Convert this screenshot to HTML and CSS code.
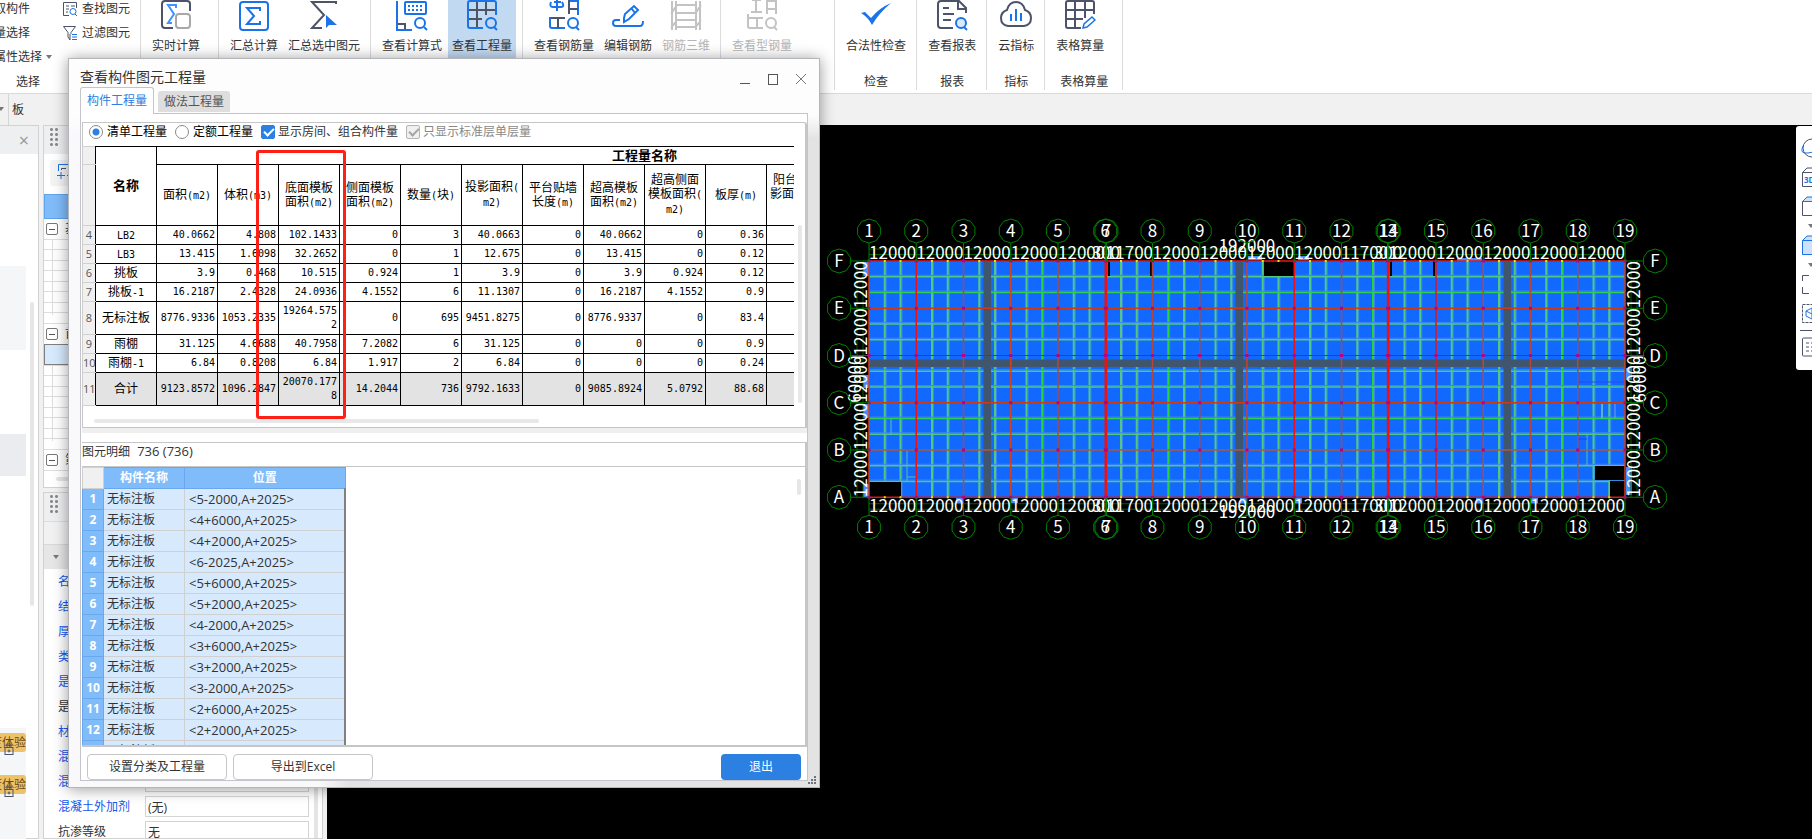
FILE: index.html
```html
<!DOCTYPE html>
<html lang="zh-CN">
<head>
  <meta charset="UTF-8" />
  <meta name="viewport" content="width=device-width, initial-scale=1.0" />
  <title>查看构件图元工程量</title>
  <link rel="stylesheet" href="styles.css">
</head>
<body>
  <header class="ribbon">
    <section class="group group-select">
      <div class="select-cols">
        <div class="mini-col">
          <button class="mini">拾取构件</button>
          <button class="mini">批量选择</button>
          <button class="mini">按属性选择 <i class="caret"></i></button>
        </div>
        <div class="mini-col">
          <button class="mini">
            <svg width="16" height="16" viewBox="0 0 16 16" fill="none" stroke="#4d5368"><path d="M7 14.500H1.500V1.500H14.500V7M4 5h3M9 5h4M4 8h3M4 11h2"/><circle cx="11" cy="10.500" r="3" stroke="#1a73e8"/><path d="M13 13l2 2" stroke="#1a73e8"/></svg>
            查找图元</button>
          <button class="mini">
            <svg width="16" height="16" viewBox="0 0 16 16" fill="none" stroke="#4d5368"><path d="M1.500 1.500H13.500L9 7.500V9M1.500 1.500L6 7.500V12L8 15V9"/><path d="M10 9.500h5M10 12h5M10 14.500h5" stroke="#1a73e8"/></svg>
            过滤图元</button>
        </div>
      </div>
      <span class="group-name">选择</span>
    </section>
    <section class="group group-live">
      <div class="tools">
        <button class="tool">
          <svg viewBox="0 0 32 32" fill="none" stroke-width="2"><path d="M30 11V4q0-3-3-3H5Q2 1 2 4V25q0 3 3 3h8" stroke="#4d5368"/><path d="M16 8V5H8l6 9-6 9h4" stroke="#3d94ff"/><rect x="16" y="14" width="14" height="14" rx="3" fill="#fff" stroke="#a8a8a8"/></svg>
          实时计算</button>
      </div>
    </section>
    <section class="group">
      <div class="tools">
        <button class="tool">
          <svg viewBox="0 0 32 32" fill="none" stroke="#1a73e8" stroke-width="2"><rect x="2" y="2" width="28" height="28" rx="3"/><path d="M22 11V8H9l7 8-7 8h13v-3"/></svg>
          汇总计算</button>
        <button class="tool">
          <svg viewBox="0 0 32 32" fill="none" stroke="#4d5368" stroke-width="2"><path d="M28 4V2H4l12 13L4 28h10"/><path d="M18 15v13l3-3h8z" fill="#1a73e8" stroke="none"/></svg>
          汇总选中图元</button>
      </div>
    </section>
    <section class="group">
      <div class="tools">
        <button class="tool">
          <svg viewBox="0 0 32 32" fill="none" stroke="#1a73e8" stroke-width="2"><path d="M1 1V30H16"/><rect x="9" y="2" width="21" height="12" rx="1"/><path d="M12 6h16M12 10h16" stroke-dasharray="2 2"/><path d="M2 24h7v5" stroke="#4d5368"/><circle cx="24" cy="23" r="5"/><path d="M28 27l3 3"/></svg>
          查看计算式</button>
        <button class="tool active">
          <svg viewBox="0 0 32 32" fill="none" stroke="#1a73e8" stroke-width="2"><path d="M17 28H4q-2 0-2-2V3q0-2 2-2H28q2 0 2 2V15"/><path d="M11 2V27M20 2V15M3 10H29M3 19H16" stroke="#4d5368"/><circle cx="25" cy="23" r="5"/><path d="M28 27l3 3"/></svg>
          查看工程量</button>
      </div>
    </section>
    <section class="group">
      <div class="tools">
        <button class="tool">
          <svg viewBox="0 0 32 32" fill="none" stroke="#1a73e8" stroke-width="2"><path d="M2 17V26q0 2 2 2H17M9 0V11M3 2q-2 5 2 5h8q4 0 1-5M6 2h7M30 0V15M21 1h9"/><path d="M21 0V14M21 9h9M3 18H17M10 18V28" stroke="#4d5368"/><circle cx="25" cy="23" r="5"/><path d="M28 27l3 3"/></svg>
          查看钢筋量</button>
        <button class="tool">
          <svg viewBox="0 0 32 32" fill="none" stroke="#1a73e8" stroke-width="2"><path d="M12 18l1-4 9-8 4 4-9 9-5 3zM20 9l3 4"/><path d="M8 20H4q-3 0-3 3t3 3H28q3 0 3-5"/></svg>
          编辑钢筋</button>
        <button class="tool" disabled>
          <svg viewBox="0 0 32 32" fill="none" stroke="#c3c3c3" stroke-width="2"><path d="M2 1V30M6 1V30M26 1V30M30 1V30M6 5H26M6 13H26M6 20H26M6 27H26M1 14l6-9M1 28l6-8M25 14l6-9M25 28l6-8"/></svg>
          钢筋三维</button>
      </div>
    </section>
    <section class="group group-steel">
      <div class="tools">
        <button class="tool" disabled>
          <svg viewBox="0 0 32 32" fill="none" stroke="#c3c3c3" stroke-width="2"><path d="M2 14V26q0 2 2 2H17M6 0h9M10 0V12M5 12h11M21 14V1H30V14M21 9h9M3 18H17M11 18V28"/><circle cx="25" cy="23" r="5"/><path d="M28 27l3 3"/></svg>
          查看型钢量</button>
      </div>
    </section>
    <section class="group">
      <div class="tools">
        <button class="tool">
          <svg viewBox="0 0 32 32"><path d="M1 13l4-1 6 6Q19 8 31 3Q19 13 12 25Q8 17 1 13z" fill="#1a73e8"/></svg>
          合法性检查</button>
      </div>
      <span class="group-name">检查</span>
    </section>
    <section class="group">
      <div class="tools">
        <button class="tool">
          <svg viewBox="0 0 32 32" fill="none" stroke="#4d5368" stroke-width="2"><path d="M17 28H5q-3 0-3-3V4q0-3 3-3H23l7 7v5M22 1V9h8M7 8h6M7 14h11M7 20h8"/><circle cx="25" cy="23" r="5" fill="#dbe9fc" stroke="#1a73e8"/><path d="M28 27l3 3" stroke="#1a73e8"/></svg>
          查看报表</button>
      </div>
      <span class="group-name">报表</span>
    </section>
    <section class="group">
      <div class="tools">
        <button class="tool">
          <svg viewBox="0 0 32 32" fill="none" stroke="#4d5368" stroke-width="2"><path d="M8 26Q1 25 1 18Q1 12 7 10Q9 2 16 2T25 10Q31 12 31 18Q31 25 24 26z"/><path d="M11 14v7M16 9v12M21 13v8" stroke="#1a73e8"/></svg>
          云指标</button>
      </div>
      <span class="group-name">指标</span>
    </section>
    <section class="group group-sheet">
      <div class="tools">
        <button class="tool">
          <svg viewBox="0 0 32 32" fill="none" stroke="#4d5368" stroke-width="2"><path d="M17 28H4q-2 0-2-2V3q0-2 2-2H28q2 0 2 2V14M11 1V28M21 1V18M2 10H30M2 19H19"/><path d="M19 28l1-4 8-7 3 3-8 7z" stroke="#1a73e8" stroke-width="1.500"/></svg>
          表格算量</button>
      </div>
      <span class="group-name">表格算量</span>
    </section>
  </header>

  <div class="subbar">
    <span class="subbar-drop"><i class="caret"></i></span>
    <span class="subbar-name">板</span>
  </div>

  <main class="work">
    <aside class="nav">
      <div class="panel-head"><button class="nav-close" aria-label="关闭">×</button></div>
      <div class="nav-list">
        <div class="nav-block"></div>
        <div class="nav-block selected"></div>
        <div class="nav-block trial">
          <span class="badge">深度体验
            <svg class="lock" viewBox="0 0 10 12" fill="none" stroke="#4d5368"><rect x="1" y="4.500" width="8" height="7"/><path d="M3 4V1h4v3"/><circle cx="5" cy="8" r="1"/></svg></span>
          <span class="badge">深度体验
            <svg class="lock" viewBox="0 0 10 12" fill="none" stroke="#4d5368"><rect x="1" y="4.500" width="8" height="7"/><path d="M3 4V1h4v3"/><circle cx="5" cy="8" r="1"/></svg></span>
        </div>
      </div>
      <i class="nav-scroll"></i>
    </aside>

    <div class="side">
      <section class="tree">
        <div class="panel-head"><i class="grip"></i></div>
        <div class="tree-tools">
          <button class="tree-btn" aria-label="新建"><svg width="16" height="16" viewBox="0 0 16 16" fill="none" stroke="#1a73e8"><path d="M1.500 8V1.500H14M4.500 5.500h4M4 9v7M0 12.500h8M10 12.500h4"/><path d="M4.500 7V5.500H9" stroke="#4d5368"/></svg></button>
        </div>
        <div class="tree-title"></div>
        <div class="tree-node"><i class="fold"></i>基础</div>
        <div class="tree-lines"></div>
        <div class="tree-node"><i class="fold"></i>首层</div>
        <div class="tree-pick"></div>
        <div class="tree-lines"></div>
        <div class="tree-node"><i class="fold"></i>第2层</div>
        <div class="tree-foot"><i></i></div>
      </section>
      <section class="props">
        <div class="panel-head"><i class="grip"></i></div>
        <div class="props-bar"></div>
        <div class="props-group"><i class="caret"></i>基本属性</div>
        <div class="props-body">
          <div class="props-rows">
            <label class="prop"><span>名称</span><input type="text"></label>
            <label class="prop"><span>结构类别</span><input type="text"></label>
            <label class="prop"><span>厚度(mm)</span><input type="text"></label>
            <label class="prop"><span>类别</span><input type="text"></label>
            <label class="prop"><span>是否叠合板</span><input type="text"></label>
            <label class="prop own"><span>是否是楼板</span><input type="text"></label>
            <label class="prop"><span>材质</span><input type="text"></label>
            <label class="prop"><span>混凝土类型</span><input type="text"></label>
            <label class="prop"><span>混凝土强度</span><input type="text"></label>
            <label class="prop"><span>混凝土外加剂</span><input type="text" value="(无)"></label>
            <label class="prop own"><span>抗渗等级</span><input type="text" value="无"></label>
          </div>
          <i class="props-scroll"></i>
        </div>
      </section>
    </div>

    <section class="canvas">
      <svg id="plan" class="plan"></svg>
      <nav class="view-bar">
        <svg viewBox="0 0 20 20" fill="none" stroke="#4d5368"><circle cx="11" cy="10" r="9"/><path d="M2 8q-4 8 5 7t13-4" stroke="#1a73e8"/></svg>
        <svg viewBox="0 0 20 20" fill="none" stroke="#4d5368"><path d="M1.500 19.500V5.500L6 1H20M1.500 5.500H20M1.500 19.500H20"/><text x="3" y="16">3D</text></svg>
        <svg viewBox="0 0 20 20" fill="none" stroke="#4d5368"><path d="M1.500 5.500L6 1H20V5.500z" fill="#cfe0fa" stroke="#1a73e8"/><path d="M1.500 5.500V19.500H20"/></svg>
        <i class="caret"></i>
        <svg viewBox="0 0 20 20" fill="#cfe0fa" stroke="#1a73e8"><path d="M1.500 19.500V5.500L6 1H20V19.500zM1.500 5.500H20"/></svg>
        <i class="caret"></i>
        <svg viewBox="0 0 20 20" fill="none" stroke="#4d5368"><path d="M1.500 7V1.500H8M1.500 13V19.500H8"/></svg>
        <svg viewBox="0 0 20 20" fill="none" stroke="#4d5368"><rect x="1.500" y="1.500" width="18" height="18" stroke-dasharray="3 1"/><path d="M5 8l6-3v11l-6-3zM5 8l6 3" stroke="#1a73e8"/></svg>
        <hr>
        <svg viewBox="0 0 20 20" fill="none" stroke="#4d5368"><rect x="1.500" y="1" width="18" height="18" rx="1"/><path d="M5 6h3M10 6h6M5 10h3M10 10h6M5 14h3M10 14h6"/></svg>
      </nav>
    </section>
  </main>

  <div class="dialog" role="dialog" aria-label="查看构件图元工程量">
    <div class="dialog-title">
      <span>查看构件图元工程量</span>
      <div class="win-btns">
        <button aria-label="最小化"><svg viewBox="0 0 12 12" stroke="#555"><path d="M1 10.500h10"/></svg></button>
        <button aria-label="最大化"><svg viewBox="0 0 12 12" fill="none" stroke="#555"><rect x="1.500" y="1.500" width="9" height="10"/></svg></button>
        <button aria-label="关闭"><svg viewBox="0 0 12 12" stroke="#777"><path d="M1 1l10 10M11 1L1 11"/></svg></button>
      </div>
    </div>
    <div class="tabs">
      <button class="tab on">构件工程量</button>
      <button class="tab">做法工程量</button>
    </div>
    <div class="tab-body">
      <section class="sums">
        <div class="options">
          <label><input type="radio" name="kind" checked>清单工程量</label>
          <label><input type="radio" name="kind">定额工程量</label>
          <label class="soft"><input type="checkbox" checked>显示房间、组合构件量</label>
          <label class="off"><input type="checkbox" checked disabled>只显示标准层单层量</label>
        </div>
        <div class="sums-view">
          <table class="sums-table">
            <colgroup><col class="c-no"><col span="17"></colgroup>
            <thead>
              <tr class="r-top">
                <th class="no"></th>
                <th rowspan="2" class="big">名称</th>
                <th colspan="16" class="big">工程量名称</th>
              </tr>
              <tr class="r-head">
                <th class="no"></th>
                <th>面积<u>(m2)</u></th>
                <th>体积<u>(m3)</u></th>
                <th>底面模板<br>面积<u>(m2)</u></th>
                <th>侧面模板<br>面积<u>(m2)</u></th>
                <th>数量<u>(</u>块<u>)</u></th>
                <th>投影面积<u>(<br>m2)</u></th>
                <th>平台贴墙<br>长度<u>(m)</u></th>
                <th>超高模板<br>面积<u>(m2)</u></th>
                <th>超高侧面<br>模板面积<u>(<br>m2)</u></th>
                <th>板厚<u>(m)</u></th>
                <th>阳台板投<br>影面积<u>(m2<br>)</u></th>
                <th colspan="5"></th>
              </tr>
            </thead>
            <tbody id="sums"></tbody>
          </table>
        </div>
        <i class="scroll-x"></i>
        <i class="scroll-y"></i>
        <i class="mark"></i>
      </section>
      <div class="splitter"></div>
      <section class="details">
        <div class="details-name">图元明细 <span class="count">736 (736)</span></div>
        <div class="details-view">
          <table class="details-table">
            <thead><tr><th class="corner"></th><th class="d-name">构件名称</th><th class="d-pos">位置</th></tr></thead>
            <tbody id="details"></tbody>
          </table>
          <i class="details-scroll"></i>
        </div>
      </section>
      <div class="dialog-foot">
        <button class="btn">设置分类及工程量</button>
        <button class="btn">导出到Excel</button>
        <button class="btn primary">退出</button>
      </div>
    </div>
    <svg class="resize" viewBox="0 0 8 8" fill="#6f7378"><path d="M6 0h2v2H6zM3 3h2v2H3zM6 3h2v2H6zM0 6h2v2H0zM3 6h2v2H3zM6 6h2v2H6z"/></svg>
  </div>

  <script src="script.js"></script>
</body>
</html>
```
FILE: styles.css
```css
* {
  box-sizing: border-box;
}
body {
  margin: 0;
  height: 100vh;
  overflow: hidden;
  display: flex;
  flex-direction: column;
  font-family: "Open Sans", "Noto Sans CJK SC", sans-serif;
  font-size: 12px;
  line-height: 16px;
  color: #333;
  background: #f1f1f1;
}
button {
  font: inherit;
  color: inherit;
  background: none;
  border: none;
  padding: 0;
  white-space: nowrap;
}
i {
  display: block;
}
.caret {
  display: inline-block;
  border: 3px solid transparent;
  border-top: 4px solid #777;
  border-bottom: none;
}

/* ribbon */
.ribbon {
  flex: none;
  display: flex;
  height: 94px;
  background: #fff;
  border-bottom: 1px solid #d9d9d9;
}
.group {
  height: 90px;
  padding: 0 10px 0 11px;
  border-right: 1px solid #dcdcdc;
  display: flex;
  flex-direction: column;
  justify-content: space-between;
}
.tools {
  display: flex;
  gap: 10px;
}
.tool {
  height: 62px;
  display: flex;
  flex-direction: column;
  align-items: center;
  gap: 6px;
}
.tool svg {
  width: 32px;
  height: 32px;
}
.tool.active {
  background: #c2d9f2;
  padding: 0 4px;
  margin: 0 -4px;
}
.tool:disabled {
  color: #b5b5b5;
}
.group-name {
  text-align: center;
}
.group-select {
  width: 226px;
  margin-left: -85px;
}
.group-live {
  min-width: 78px;
}
.group-steel {
  min-width: 114px;
}
.group-sheet {
  min-width: 78px;
}
.select-cols {
  display: flex;
  margin: -3px 0 0 56px;
}
.mini-col {
  flex: none;
  width: 80px;
}
.mini {
  height: 24px;
  display: flex;
  align-items: center;
  gap: 4px;
}

.subbar {
  flex: none;
  height: 31px;
  display: flex;
  background: #f1f1f1;
}
.subbar-drop {
  width: 9px;
  padding: 5px 4px 0 0;
  border-right: 1px solid #d5d5d5;
  direction: rtl;
}
.subbar-name {
  padding: 8px 3px;
}

/* left panels */
.work {
  flex: 1;
  min-height: 0;
  display: flex;
}
.panel-head {
  height: 28px;
  background: #eeeff1;
}
.nav {
  position: relative;
  flex: none;
  width: 39px;
  background: #fff;
  border: 1px solid #d2d2d2;
  border-left: none;
}
.nav-close {
  display: block;
  width: 48px;
  height: 28px;
  font-size: 18px;
  color: #999;
}
.nav-list {
  width: 26px;
  padding-top: 112px;
}
.nav-block {
  height: 84px;
  margin-bottom: 84px;
  background: #f5f6f8;
}
.nav-block.selected {
  height: 42px;
  margin-bottom: 252px;
  background: #ebecf0;
}
.nav-block.trial {
  height: 140px;
  margin: 0;
  padding-top: 5px;
}
.badge {
  position: relative;
  display: flex;
  justify-content: flex-end;
  align-items: center;
  width: 26px;
  height: 19px;
  margin-bottom: 23px;
  border-radius: 0 3px 3px 0;
  background: #edc268;
  color: #6d4a12;
  white-space: nowrap;
}
.lock {
  position: absolute;
  left: 4px;
  top: 10px;
  width: 10px;
  height: 12px;
}
.nav-scroll {
  position: absolute;
  right: 4px;
  top: 176px;
  width: 4px;
  height: 304px;
  border-radius: 2px;
  background: #e6e6e6;
}
.side {
  flex: none;
  width: 280px;
  margin: 0 4px 0 4px;
  display: flex;
  flex-direction: column;
  gap: 4px;
}
.tree,
.props {
  background: #fff;
  border: 1px solid #d2d2d2;
}
.props {
  flex: 1;
  min-height: 0;
  overflow: hidden;
}
.grip {
  width: 10px;
  height: 22px;
  margin-left: 5px;
  background: radial-gradient(circle, #8a8a8a 1px, transparent 2px) 0 6px / 5px 5px;
}
.tree-tools {
  height: 40px;
  padding: 6px;
}
.tree-btn {
  width: 40px;
  height: 26px;
  padding-left: 7px;
  text-align: left;
  background: #f4f4f4;
  border-radius: 3px;
}
.tree-title {
  height: 25px;
  background: #80bbfa;
  border: 1px solid #5fa4ee;
}
.tree-node {
  height: 20px;
  display: flex;
  align-items: center;
  gap: 7px;
  padding-left: 2px;
}
.fold {
  width: 12px;
  height: 12px;
  border: 1px solid #777;
  border-radius: 2px;
  background: linear-gradient(#555, #555) center / 6px 1px no-repeat;
}
.tree-lines {
  height: 85px;
  background:
    linear-gradient(#ddd, #ddd) 8px 0 / 1px 76px no-repeat,
    repeating-linear-gradient(#ddd 0 1px, transparent 1px 10px, #ddd 10px 11px, transparent 11px 21px);
}
.tree-pick {
  height: 21px;
  background: #d6e9fd;
  border: 1px solid #808080;
}
.tree-foot {
  height: 17px;
  border-top: 1px solid #ddd;
  padding: 6px 12px;
}
.tree-foot i {
  height: 4px;
  border-radius: 2px;
  background: #e4e4e4;
}
.props-bar {
  height: 23px;
  background: #f1f1f1;
  border-top: 1px solid #ddd;
}
.props-group {
  height: 25px;
  padding-left: 9px;
  display: flex;
  align-items: center;
  gap: 9px;
  background: #e6e6e6;
  border-top: 1px solid #d8d8d8;
}
.props-body {
  display: flex;
}
.props-rows {
  flex: 1;
}
.prop {
  height: 25px;
  display: flex;
  align-items: center;
  padding-left: 14px;
  color: #1456f0;
}
.prop span {
  width: 87px;
}
.prop input {
  flex: 1;
  min-width: 0;
  height: 21px;
  padding: 0 2px;
  border: 1px solid #d5d5d5;
  font: inherit;
  color: #333;
}
.prop.own {
  color: #333;
}
.props-scroll {
  width: 4px;
  margin: 0 4px 0 5px;
  background: #e4e4e4;
}

/* drawing area */
.canvas {
  position: relative;
  flex: 1;
  min-width: 0;
  background: #000;
}
.plan {
  display: block;
  width: 100%;
  height: 100%;
}
.plan text {
  font-family: "Noto Sans CJK SC", sans-serif;
  font-size: 17px;
  fill: #fff;
  text-anchor: middle;
}
.view-bar {
  position: absolute;
  top: 1px;
  right: 0;
  width: 16px;
  padding: 12px 0 13px 5px;
  display: flex;
  flex-direction: column;
  gap: 9px;
  overflow: hidden;
  background: #fff;
  border-radius: 3px 0 0 3px;
}
.view-bar svg {
  flex: none;
  width: 20px;
  height: 20px;
}
.view-bar text {
  font: bold 8px "Open Sans", sans-serif;
  fill: #1a73e8;
  stroke: none;
  text-anchor: start;
}
.view-bar .caret {
  flex: none;
  width: 6px;
  margin: -1px 0 -2px 7px;
}
.view-bar hr {
  width: 20px;
  margin: -2px 0 -3px -1px;
  border: none;
  border-top: 1px solid #4d5368;
}

/* dialog */
.dialog {
  position: absolute;
  left: 68px;
  top: 58px;
  width: 752px;
  height: 730px;
  padding: 0 11px 6px;
  display: flex;
  flex-direction: column;
  border: 1px solid #b4b6b9;
  background:
    linear-gradient(#fdfdfd 56px, transparent 80px),
    linear-gradient(to right, #f9f9fc 250px, #e3e3e3 280px);
  box-shadow: 0 1px 14px rgba(0, 0, 0, 0.4);
}
.dialog-title {
  height: 28px;
  padding-top: 8px;
  display: flex;
  justify-content: space-between;
  font-size: 14px;
  line-height: 20px;
}
.win-btns {
  display: flex;
  gap: 16px;
  padding: 3px 1px 0 0;
}
.win-btns svg {
  display: block;
  width: 12px;
  height: 12px;
}
.tabs {
  display: flex;
  align-items: flex-end;
  gap: 4px;
  height: 26px;
  position: relative;
}
.tab {
  width: 72px;
  height: 21px;
  margin-bottom: 1px;
  border-radius: 3px 3px 0 0;
  background: #dedede;
  color: #555;
}
.tab.on {
  width: 74px;
  height: 27px;
  margin-bottom: -1px;
  background: #fff;
  border: 1px solid #c3c5ca;
  border-bottom: none;
  color: #2b80e2;
}
.tab-body {
  flex: 1;
  min-height: 0;
  padding: 8px 0 0 1px;
  background: #fff;
  border: 1px solid #c3c5ca;
  display: flex;
  flex-direction: column;
}
.sums {
  position: relative;
  flex: none;
  height: 306px;
  border: 1px solid #c6c6c6;
  border-right-width: 2px;
  border-radius: 0 3px 0 0;
}
.options {
  height: 23px;
  padding: 0 6px 6px;
  display: flex;
  align-items: center;
  gap: 8px;
  color: #000;
}
.options label {
  display: flex;
  align-items: center;
  gap: 4px;
}
.options .soft {
  color: #333;
  gap: 3px;
}
.options .off {
  color: #888;
  gap: 3px;
}
.options input {
  appearance: none;
  width: 14px;
  height: 14px;
  margin: 0;
  border: 1px solid #8a8a8a;
}
.options input[type="radio"] {
  border-radius: 50%;
}
.options input[type="radio"]:checked {
  background: radial-gradient(circle, #2b80e2 3px, #fff 4px);
}
.options input[type="checkbox"] {
  border-radius: 2px;
  border-color: #2b80e2;
  background: #2b80e2;
}
.options input[type="checkbox"]::after {
  content: "";
  display: block;
  width: 8px;
  height: 4px;
  margin: 2px;
  border: solid #fff;
  border-width: 0 0 2px 2px;
  transform: rotate(-45deg);
}
.options input[type="checkbox"]:disabled {
  border-color: #b5b5b5;
  background: #f0f0f0;
}
.options input[type="checkbox"]:disabled::after {
  border-color: #a5a5a5;
}
.sums-view {
  margin: 0 11px 0 -1px;
  overflow: hidden;
}
.sums-table {
  width: 1050px;
  table-layout: fixed;
  border-collapse: collapse;
  color: #000;
  line-height: 14px;
  font-family: "DejaVu Sans Mono", "Noto Sans CJK SC", monospace;
}
.sums-table col {
  width: 61px;
}
.sums-table .c-no {
  width: 13px;
}
.sums-table th,
.sums-table td {
  height: 19px;
  padding: 0 2px;
  border: 1px solid #000;
  font-weight: normal;
  white-space: nowrap;
}
.sums-table td {
  text-align: right;
  font-size: 10px;
}
.sums-table .part {
  text-align: center;
  font-size: 12px;
}
.sums-table u {
  font-size: 10px;
  text-decoration: none;
}
.sums-table .r-top th {
  height: 18px;
}
.sums-table .r-head th {
  height: 61px;
}
.sums-table .tall td {
  height: 33px;
}
.sums-table .total td {
  background: #e3e3e3;
}
.sums-table th.big {
  font-size: 13px;
  font-weight: bold;
}
.sums-table .no {
  padding: 0;
  border: 1px solid #d0d0d0;
  border-right-color: #000;
  background: #f0f0f0;
  color: #555;
  font-family: "Open Sans", sans-serif;
  font-size: 11px;
}
.scroll-x {
  position: absolute;
  left: 11px;
  bottom: 4px;
  width: 445px;
  height: 4px;
  border-radius: 2px;
  background: #e8e8e8;
}
.scroll-y {
  position: absolute;
  right: 3px;
  top: 102px;
  width: 4px;
  height: 178px;
  border-radius: 2px;
  background: #e8e8e8;
}
.mark {
  position: absolute;
  left: 173px;
  top: 27px;
  width: 90px;
  height: 269px;
  border: 3px solid #ff2015;
  border-radius: 3px;
}
.splitter {
  flex: none;
  height: 5px;
  margin-bottom: 9px;
  background: #efefef;
}
.details {
  flex: 1;
  min-height: 0;
  display: flex;
  flex-direction: column;
  border: 1px solid #c6c6c6;
  border-width: 1px 2px 2px 0;
}
.details-name {
  height: 24px;
  border-bottom: 1px solid #c6c6c6;
}
.count {
  margin-left: 4px;
  font-size: 13px;
}
.details-view {
  position: relative;
  flex: 1;
  min-height: 0;
  overflow: hidden;
}
.details-table {
  width: 264px;
  table-layout: fixed;
  border-collapse: collapse;
}
.details-table th,
.details-table td {
  height: 21px;
  padding: 0 3px;
  border: 1px solid #d0d0d0;
}
.details-table td {
  background: #d6e9fd;
}
.details-table td:last-child {
  padding-left: 4px;
  border-right: 2px solid #808080;
  font-size: 13px;
}
.details-table th {
  padding: 0;
  background: #80bbfa;
  border-color: #69a8ee;
  color: #fff;
}
.details-table th.corner {
  width: 21px;
  background: #f0f0f0;
  border-color: #d0d0d0;
}
.details-table .d-name {
  width: 81px;
}
.details-scroll {
  position: absolute;
  right: 4px;
  top: 12px;
  width: 4px;
  height: 16px;
  border-radius: 2px;
  background: #e6e6e6;
}
.dialog-foot {
  flex: none;
  height: 33px;
  padding: 7px 6px 0 5px;
  display: flex;
  gap: 6px;
}
.btn {
  width: 140px;
  height: 26px;
  border: 1px solid #c6c6c6;
  border-radius: 4px;
  background: #fff;
}
.btn.primary {
  width: 80px;
  margin-left: auto;
  border: none;
  background: #2b80e2;
  color: #fff;
}
.resize {
  position: absolute;
  right: 3px;
  bottom: 3px;
  width: 8px;
  height: 8px;
}
```
FILE: script.js
```js
const sums = [
  [4, 'LB2', '40.0662', '4.808', '102.1433', '0', '3', '40.0663', '0', '40.0662', '0', '0.36'],
  [5, 'LB3', '13.415', '1.6098', '32.2652', '0', '1', '12.675', '0', '13.415', '0', '0.12'],
  [6, '挑板', '3.9', '0.468', '10.515', '0.924', '1', '3.9', '0', '3.9', '0.924', '0.12'],
  [7, '挑板-1', '16.2187', '2.4328', '24.0936', '4.1552', '6', '11.1307', '0', '16.2187', '4.1552', '0.9'],
  [8, '无标注板', '8776.9336', '1053.2335', '19264.575<br>2', '0', '695', '9451.8275', '0', '8776.9337', '0', '83.4'],
  [9, '雨棚', '31.125', '4.6688', '40.7958', '7.2082', '6', '31.125', '0', '0', '0', '0.9'],
  [10, '雨棚-1', '6.84', '0.8208', '6.84', '1.917', '2', '6.84', '0', '0', '0', '0.24'],
  [11, '合计', '9123.8572', '1096.2847', '20070.177<br>8', '14.2044', '736', '9792.1633', '0', '9085.8924', '5.0792', '88.68']
];
document.getElementById('sums').innerHTML = sums.map(([no, part, ...vals]) => {
  const cls = no === 11 ? 'tall total' : no === 8 ? 'tall' : '';
  const name = part.replace(/[A-Z0-9-]+/g, '<u>$&</u>');
  return `<tr class="${cls}"><th class="no">${no}</th><td class="part">${name}</td>` +
    vals.map(v => `<td>${v}</td>`).join('') + '<td></td><td colspan="5"></td></tr>';
}).join('');

const places = ['5-2000', '4+6000', '4+2000', '6-2025', '5+6000', '5+2000', '4-2000',
  '3+6000', '3+2000', '3-2000', '2+6000', '2+2000', '2-2000'];
document.getElementById('details').innerHTML = places.map((p, i) =>
  `<tr><th>${i + 1}</th><td>无标注板</td><td>&lt;${p},A+2025&gt;</td></tr>`).join('');

// floor plan, axes in mm
const ox = 542, oy = 136, bay = 47.25, k = bay / 12000;
const w = 16 * bay, h = 5 * bay;
const axes = [0, 12, 24, 36, 48, 60, 60.3, 72, 84, 96, 108, 120, 131.7, 132, 144, 156, 168, 180, 192];
const rows = ['F', 'E', 'D', 'C', 'B', 'A'];
const ax = i => ox + axes[i] * 1000 * k;
const out = [];
const rect = (x, y, rw, rh, fill) => out.push(`<rect x="${x}" y="${y}" width="${rw}" height="${rh}" fill="${fill}"/>`);
const line = (x1, y1, x2, y2, c, sw = 1) => out.push(`<path d="M${x1} ${y1}L${x2} ${y2}" stroke="${c}" stroke-width="${sw}"/>`);
const text = (x, y, s) => out.push(`<text x="${x}" y="${y}">${s}</text>`);
const vtext = (x, y, s) => out.push(`<text transform="translate(${x} ${y}) rotate(-90)">${s}</text>`);
const bubble = (x, y, s) => {
  const pts = [];
  for (let a = 0; a < 10; a++) {
    const t = (a * 36 + 18) * Math.PI / 180;
    pts.push((x + 12 * Math.cos(t)).toFixed(1) + ',' + (y + 12 * Math.sin(t)).toFixed(1));
  }
  out.push(`<polygon points="${pts.join(' ')}" fill="none" stroke="#008000"/>`);
  text(x, y + 6, s);
};

// slabs and secondary beams
rect(ox, oy, w, h, '#1169ff');
for (let i = 1; i < 48; i++) {
  if (i % 3 === 0) continue;
  const x = ox + i * bay / 3;
  line(x + 1.5, oy, x + 1.5, oy + h, '#3f84f5');
  line(x, oy, x, oy + h, [11, 19, 32, 44].includes(i) ? '#26d43a' : '#4fc882', 2);
}
for (let i = 1; i < 15; i++) {
  if (i % 3 === 0) continue;
  const y = oy + i * bay / 3;
  line(ox, y - 1.5, ox + w, y - 1.5, '#3f84f5');
  line(ox, y, ox + w, y, i === 2 || i === 10 ? '#2fd048' : '#4fc882', 1.5);
}
[114.5, 366.5, 634.5].forEach(x => rect(ox + x, oy, 7.5, h, '#40566f'));
rect(ox, oy + 98.5, w, 7.5, '#40566f');
// openings
[[0, 221, 32, 15], [239, 0, 2, 15], [281, 0, 2, 15], [395, 0, 30, 15], [521, 0, 2, 15], [564, 0, 2, 15],
  [726, 205, 30, 14], [741, 220, 15, 16]].forEach(([x, y, a, b]) => rect(ox + x, oy + y, a, b, '#000'));
// slabs outside of the outline
[[-6, 1, 6, 14], [-6, 114, 6, 13], [-6, 143, 6, 14], [-6, 223, 6, 13], [379, -5, 14, 4], [429, -5, 11, 4],
  [588, -3, 25, 3], [87, 237, 7, 6], [142, 237, 7, 5], [371, 237, 7, 6], [426, 237, 7, 6], [607, 237, 7, 6],
  [662, 237, 7, 6], [757, 107, 6, 12], [757, 206, 6, 28]].forEach(([x, y, a, b]) => rect(ox + x, oy + y, a, b, '#4a8cff'));
// local beams
line(ox + 22, oy + 158, ox + 22, oy + 174, '#53c4c4');
line(ox + 38, oy + 190, ox + 38, oy + 220, '#53c4a0');
line(ox + 38, oy + 216, ox + 47, oy + 216, '#53c4a0');
line(ox + 733, oy + 143, ox + 733, oy + 157, '#53b4d4', 2);
line(ox + 746, oy + 143, ox + 746, oy + 157, '#7f9fd4');
line(ox + 718, oy + 173, ox + 718, oy + 204, '#53c4a0');
line(ox + 709, oy + 121, ox + 756, oy + 121, '#2f46ff');
line(ox + 709, oy + 178, ox + 718, oy + 178, '#3a30ff');

// axis lines
rows.forEach((r, j) => {
  const y = oy + j * bay;
  line(ox, y, ox + w, y, ['#e01818', '#d03a10', '#c01018', '#d03a10', '#a85a40', '#d01c1c'][j], j === 2 ? 1 : 1.5);
});
axes.forEach((a, i) => {
  const x = ax(i);
  const bright = [1, 5, 6, 10, 12, 13, 14].includes(i);
  line(x, oy, x, oy + h, bright ? '#f01010' : i % 3 ? '#b5473a' : '#d2401c', 1.5);
  rows.forEach((r, j) => rect(x - 1.5, oy + j * bay - 1.5, 3, 3, '#b80080'));
});
for (let i = 0; i < 48; i++) {
  if (i % 3 === 0) continue;
  rect(ox + i * bay / 3 - 1, oy - 1, 2, 2, '#e6e600');
  rect(ox + i * bay / 3 - 1, oy + h - 1, 2, 2, '#e6e600');
}

// dimensions
const green = '#006000';
[-12, -6.5, h + 6.5, h + 12].forEach(d => line(ox, oy + d, ox + w, oy + d, green));
[-12, -6, w + 6, w + 12].forEach(d => line(ox + d, oy, ox + d, oy + h, green));
for (let i = 0; i < 18; i++) {
  const mid = (ax(i) + ax(i + 1)) / 2;
  const len = Math.round((axes[i + 1] - axes[i]) * 1000);
  text(mid, oy - 2, len);
  text(mid, oy + h + 15, len);
}
text(ox + w / 2, oy - 9, 192000);
text(ox + w / 2, oy + h + 21, 192000);
for (let j = 0; j < 5; j++) {
  vtext(ox - 2, oy + (j + 0.5) * bay, 12000);
  vtext(ox + w + 15, oy + (j + 0.5) * bay, 12000);
}
vtext(ox - 8, oy + h / 2, 60000);
vtext(ox + w + 21, oy + h / 2, 60000);

axes.forEach((a, i) => {
  line(ax(i), oy - 18, ax(i), oy, '#008000');
  line(ax(i), oy + h, ax(i), oy + h + 18, '#008000');
  bubble(ax(i), oy - 30, i + 1);
  bubble(ax(i), oy + h + 30, i + 1);
});
rows.forEach((r, j) => {
  const y = oy + j * bay;
  line(ox - 18, y, ox, y, '#008000');
  line(ox + w, y, ox + w + 18, y, '#008000');
  bubble(ox - 30, y, r);
  bubble(ox + w + 30, y, r);
});
document.getElementById('plan').innerHTML = out.join('');
```
